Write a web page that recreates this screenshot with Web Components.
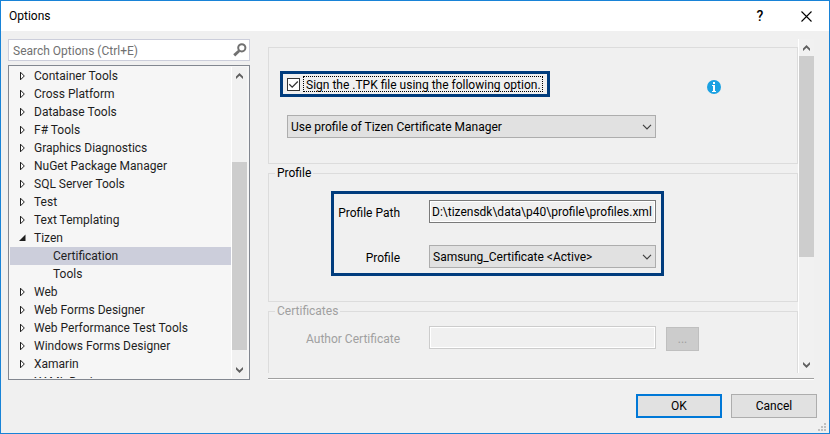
<!DOCTYPE html>
<html lang="en">
<head>
<meta charset="utf-8">
<title>Options</title>
<style>
  html, body { margin: 0; height: 100%; }
  body { font: 12px/16px Roboto, "Open Sans", sans-serif; color: #000; background: #f0f0f0; }
</style>
</head>
<body>
<options-dialog></options-dialog>

<script>
const define = (name, html, setup) => {
  const template = document.createElement('template');
  template.innerHTML = '<style>*,*::before,*::after{box-sizing:border-box}:host{box-sizing:border-box}button,input,select{font:inherit;color:inherit;margin:0;border-radius:0}</style>' + html;
  customElements.define(name, class extends HTMLElement {
    constructor() {
      super();
      this.attachShadow({ mode: 'open' }).append(template.content.cloneNode(true));
    }
    connectedCallback() { if (setup) setup(this, this.shadowRoot); }
  });
};

define('title-bar', `
  <style>
    :host { display: flex; align-items: center; height: 30px; flex: none; background: #fff; padding: 0 12px 0 8px; }
    h1 { font: inherit; margin: 0; flex: 1; }
    button { width: 38px; height: 29px; padding: 0; border: 0; background: none; display: grid; place-items: center; }
    .help { font-size: 14px; font-weight: 500; }
    .close { justify-items: end; padding-right: 5px; }
    svg { display: block; }
  </style>
  <h1><slot></slot></h1>
  <button class="help" aria-label="Help">?</button>
  <button class="close" aria-label="Close"><svg width="11" height="11" viewBox="0 0 11 11" fill="none" stroke="#000" stroke-width="1.1"><path d="M.5 .5L10.500 10.500M10.500 .5L.5 10.500"/></svg></button>
`);

define('search-box', `
  <style>
    :host { display: flex; align-items: center; height: 22px; flex: none; background: #fff; border: 1px solid #cccedb; padding: 0 2px 0 0; }
    input { flex: 1; min-width: 0; height: 20px; border: 0; background: none; padding: 2px 4px 0; outline: 0; }
    input::placeholder { color: #717171; opacity: 1; }
    button { border: 0; background: none; padding: 0; width: 14px; height: 18px; }
    svg { display: block; }
  </style>
  <input type="text" aria-label="Search Options" placeholder="Search Options (Ctrl+E)">
  <button aria-label="Search"><svg width="14" height="14" viewBox="0 0 14 14" fill="none" stroke="#717171"><circle cx="8.800" cy="4.800" r="3.600" stroke-width="2"/><path d="M6.200 7.800L1.200 12.400" stroke-width="2.800"/></svg></button>
`);

define('scroll-strip', `
  <style>
    :host { display: flex; flex-direction: column; width: 16px; flex: none; border-left: 1px solid #fff; background: #f1f1f1; }
    button { border: 0; padding: 0; background: none; height: 17px; flex: none; display: grid; place-items: center; }
    .before { flex: var(--before, 0); }
    .thumb { flex: var(--thumb, 1); background: #cdcdcd; }
    .after { flex: var(--after, 1); }
    svg { display: block; }
  </style>
  <button aria-label="Scroll up"><svg width="7" height="6" viewBox="0 0 7 6" fill="#606060"><path d="M3.500 0L7 3.500V6L3.500 2.800L0 6V3.500Z"/></svg></button>
  <div class="before"></div><div class="thumb"></div><div class="after"></div>
  <button aria-label="Scroll down"><svg width="7" height="6" viewBox="0 0 7 6" fill="#606060"><path d="M3.500 6L7 2.500V0L3.500 3.200L0 0V2.500Z"/></svg></button>
`);

define('tree-node', `
  <style>
    :host { display: flex; align-items: center; height: 18px; padding-left: 9px; color: #1e1e1e; white-space: nowrap; }
    :host([level="2"]) { padding-left: 28px; }
    :host([selected]) { background: #cccedb; }
    svg { display: none; width: 7px; height: 10px; }
    .icon { width: 15px; flex: none; display: flex; align-items: center; }
    :host([state="closed"]) .closed, :host([state="open"]) .open { display: block; }
  </style>
  <span class="icon">
    <svg class="closed" viewBox="0 0 7 10" fill="#fff" stroke="#1e1e1e"><path d="M1.500 1.200V8.800L5.300 5Z"/></svg>
    <svg class="open" viewBox="0 0 7 10" fill="#1e1e1e"><path d="M6.500 1.500V8H0Z"/></svg>
  </span>
  <slot></slot>
`, host => {
  host.setAttribute('role', 'treeitem');
  if (host.hasAttribute('state')) host.setAttribute('aria-expanded', host.getAttribute('state') === 'open');
});

define('tree-view', `
  <style>
    :host { display: flex; flex: 1; min-height: 0; background: #f6f6f6; border: 1px solid #828790; padding: 1px 2px 1px 1px; }
    .list { flex: 1; min-width: 0; overflow: hidden; }
    scroll-strip { --before: 78; --thumb: 188; --after: 11; }
  </style>
  <div class="list" role="tree"><slot></slot></div>
  <scroll-strip></scroll-strip>
`);

define('group-box', `
  <style>
    :host { display: block; }
    fieldset { margin: 0; padding: 0; border: 1px solid #dcdcdc; min-width: 0; }
    legend { margin-left: 6px; padding: 0 2px; height: 16px; }
    :host([disabled]) legend { color: #a0a0a0; }
  </style>
  <fieldset><legend></legend><slot></slot></fieldset>
`, (host, root) => {
  const text = host.getAttribute('label');
  const legend = root.querySelector('legend');
  if (text) legend.textContent = text; else if (legend) legend.remove();
});

define('call-out', `
  <style>:host { display: block; border: 3px solid #003c7d; }</style>
  <slot></slot>
`);

define('check-option', `
  <style>
    :host { display: block; }
    label { display: flex; align-items: center; gap: 3px; }
    .box { display: grid; flex: none; width: 13px; height: 13px; }
    .box > * { grid-area: 1 / 1; }
    input { appearance: none; width: 13px; height: 13px; border: 1px solid #333; background: #fff; }
    svg { display: none; pointer-events: none; z-index: 1; }
    input:checked + svg { display: block; }
    .text { flex: 1; border: 1px dotted #000; height: 16px; line-height: 16px; padding-left: 2px; white-space: nowrap; }
  </style>
  <label><span class="box"><input type="checkbox" checked><svg width="13" height="13" viewBox="0 0 13 13" fill="none" stroke="#333" stroke-width="1.300"><path d="M2.300 6.300L5.200 9.200L10.800 3.500"/></svg></span><span class="text"><slot></slot></span></label>
`);

define('drop-down', `
  <style>
    :host { display: grid; height: 23px; align-items: center; min-width: 0; }
    select { grid-area: 1 / 1; appearance: none; width: 100%; height: 23px; border: 1px solid #adadad; background: #e1e1e1; padding: 1px 24px 0 3px; outline: 0; }
    svg { grid-area: 1 / 1; justify-self: end; margin-right: 4px; pointer-events: none; }
  </style>
  <select></select>
  <svg width="10" height="6" viewBox="0 0 10 6" fill="none" stroke="#404040" stroke-width="1.200"><path d="M1 .8L5 4.800L9 .8"/></svg>
`, (host, root) => {
  const select = root.querySelector('select');
  select.setAttribute('aria-label', host.getAttribute('label'));
  select.replaceChildren(new Option(host.getAttribute('value')));
});

define('field-row', `
  <style>
    :host { display: grid; grid-template-columns: var(--label-width, 69px) minmax(0, 1fr); column-gap: 29px; align-items: center; height: 23px; }
    label { justify-self: end; white-space: nowrap; padding-top: 3px; }
    input { width: 100%; height: 23px; border: 1px solid #7a7a7a; box-shadow: inset 0 0 0 1px #fff; background: #f0f0f0; padding: 0 2px; outline: 0; }
    :host([disabled]) label { color: #a0a0a0; }
    :host([disabled]) input { border-color: #ccc; }
  </style>
  <label for="control"></label>
`, (host, root) => {
  const label = root.querySelector('label');
  label.textContent = host.getAttribute('label');
  if (host.getAttribute('kind') === 'select') {
    const drop = document.createElement('drop-down');
    drop.id = 'control';
    drop.setAttribute('label', host.getAttribute('label'));
    drop.setAttribute('value', host.getAttribute('value'));
    root.append(drop);
  } else {
    const input = document.createElement('input');
    input.id = 'control';
    input.type = 'text';
    input.readOnly = true;
    input.disabled = host.hasAttribute('disabled');
    input.value = host.getAttribute('value') || '';
    root.append(input);
  }
});

define('push-button', `
  <style>
    :host { display: block; width: 86px; height: 24px; }
    button { width: 100%; height: 100%; padding: 0; border: 1px solid #adadad; background: #e1e1e1; }
    :host([primary]) button { border: 2px solid #0078d7; }
    button:disabled { border-color: #bfbfbf; background: #ccc; color: #a0a0a0; }
  </style>
  <button><slot></slot></button>
`, (host, root) => { root.querySelector('button').disabled = host.hasAttribute('disabled'); });

define('options-dialog', `
  <style>
    :host { display: flex; flex-direction: column; height: 100vh; border: 1px solid #1883d7; background: #f0f0f0; position: relative; overflow: hidden; }
    main { flex: 1; min-height: 0; display: flex; gap: 18px; padding: 8px 15px 0 7px; }
    nav { width: 242px; flex: none; display: flex; flex-direction: column; gap: 4px; }
    .page { flex: 1; min-width: 0; display: flex; flex-direction: column; gap: 5px; }
    .view { flex: 1; min-height: 0; display: flex; }
    .groups { flex: 1; min-width: 0; overflow: hidden; padding-top: 8px; display: flex; flex-direction: column; gap: 1px; }
    .groups > * { flex: none; }
    .view scroll-strip { --before: 0; --thumb: 201; --after: 99; }
    hr { margin: 0; border: 0; height: 2px; background: #fff; border-top: 1px solid #a0a0a0; flex: none; }
    .sign { padding: 23px 0 25px 11px; display: grid; gap: 18px; }
    .sign > div { display: flex; align-items: center; justify-content: space-between; padding-right: 76px; }
    .sign call-out { width: 270px; padding: 2px 4px 2px 4px; }
    .sign drop-down { margin: 0 141px 0 7px; }
    .info { width: 14px; height: 14px; margin-top: 6px; }
    .profile { margin: 10px 133px 25px 62px; padding: 6px 5px 5px 0; display: grid; gap: 22px; --label-width: 66px; }
    .author { display: flex; gap: 10px; padding: 7px 98px 40px 36px; --label-width: 95px; }
    .author field-row { flex: 1; min-width: 0; }
    .author push-button { width: 33px; margin-top: 1px; }
    footer { flex: none; display: flex; justify-content: flex-end; gap: 9px; padding: 14px 12px 15px; }
    .grip { position: absolute; right: 3px; bottom: 2px; }
  </style>
  <title-bar>Options</title-bar>
  <main>
    <nav aria-label="Option pages">
      <search-box></search-box>
      <tree-view>
        <tree-node state="closed">Container Tools</tree-node>
        <tree-node state="closed">Cross Platform</tree-node>
        <tree-node state="closed">Database Tools</tree-node>
        <tree-node state="closed">F# Tools</tree-node>
        <tree-node state="closed">Graphics Diagnostics</tree-node>
        <tree-node state="closed">NuGet Package Manager</tree-node>
        <tree-node state="closed">SQL Server Tools</tree-node>
        <tree-node state="closed">Test</tree-node>
        <tree-node state="closed">Text Templating</tree-node>
        <tree-node state="open">Tizen</tree-node>
        <tree-node level="2" selected>Certification</tree-node>
        <tree-node level="2">Tools</tree-node>
        <tree-node state="closed">Web</tree-node>
        <tree-node state="closed">Web Forms Designer</tree-node>
        <tree-node state="closed">Web Performance Test Tools</tree-node>
        <tree-node state="closed">Windows Forms Designer</tree-node>
        <tree-node state="closed">Xamarin</tree-node>
        <tree-node state="closed">XAML Designer</tree-node>
      </tree-view>
    </nav>
    <section class="page">
      <div class="view">
        <div class="groups">
          <group-box>
            <div class="sign">
              <div>
                <call-out><check-option>Sign the .TPK file using the following option.</check-option></call-out>
                <svg class="info" viewBox="0 0 14 14" role="img" aria-label="Information"><circle cx="7" cy="7" r="7" fill="#1ba1e2"/><path d="M6 2H8V4H6ZM5 5H8V11H9V12H5V11H6V6H5Z" fill="#fff"/></svg>
              </div>
              <drop-down label="Signing option" value="Use profile of Tizen Certificate Manager"></drop-down>
            </div>
          </group-box>
          <group-box label="Profile">
            <call-out class="profile">
              <field-row label="Profile Path" value="D:\\tizensdk\\data\\p40\\profile\\profiles.xml"></field-row>
              <field-row label="Profile" kind="select" value="Samsung_Certificate &lt;Active&gt;"></field-row>
            </call-out>
          </group-box>
          <group-box label="Certificates" disabled>
            <div class="author">
              <field-row label="Author Certificate" disabled></field-row>
              <push-button disabled>...</push-button>
            </div>
          </group-box>
        </div>
        <scroll-strip></scroll-strip>
      </div>
      <hr>
    </section>
  </main>
  <footer>
    <push-button primary>OK</push-button>
    <push-button>Cancel</push-button>
  </footer>
  <svg class="grip" width="8" height="8" viewBox="0 0 8 8" fill="#bfbfbf"><path d="M6 0h2v2H6ZM3 3h2v2H3ZM6 3h2v2H6ZM0 6h2v2H0ZM3 6h2v2H3ZM6 6h2v2H6Z"/></svg>
`);
</script>
</body>
</html>
